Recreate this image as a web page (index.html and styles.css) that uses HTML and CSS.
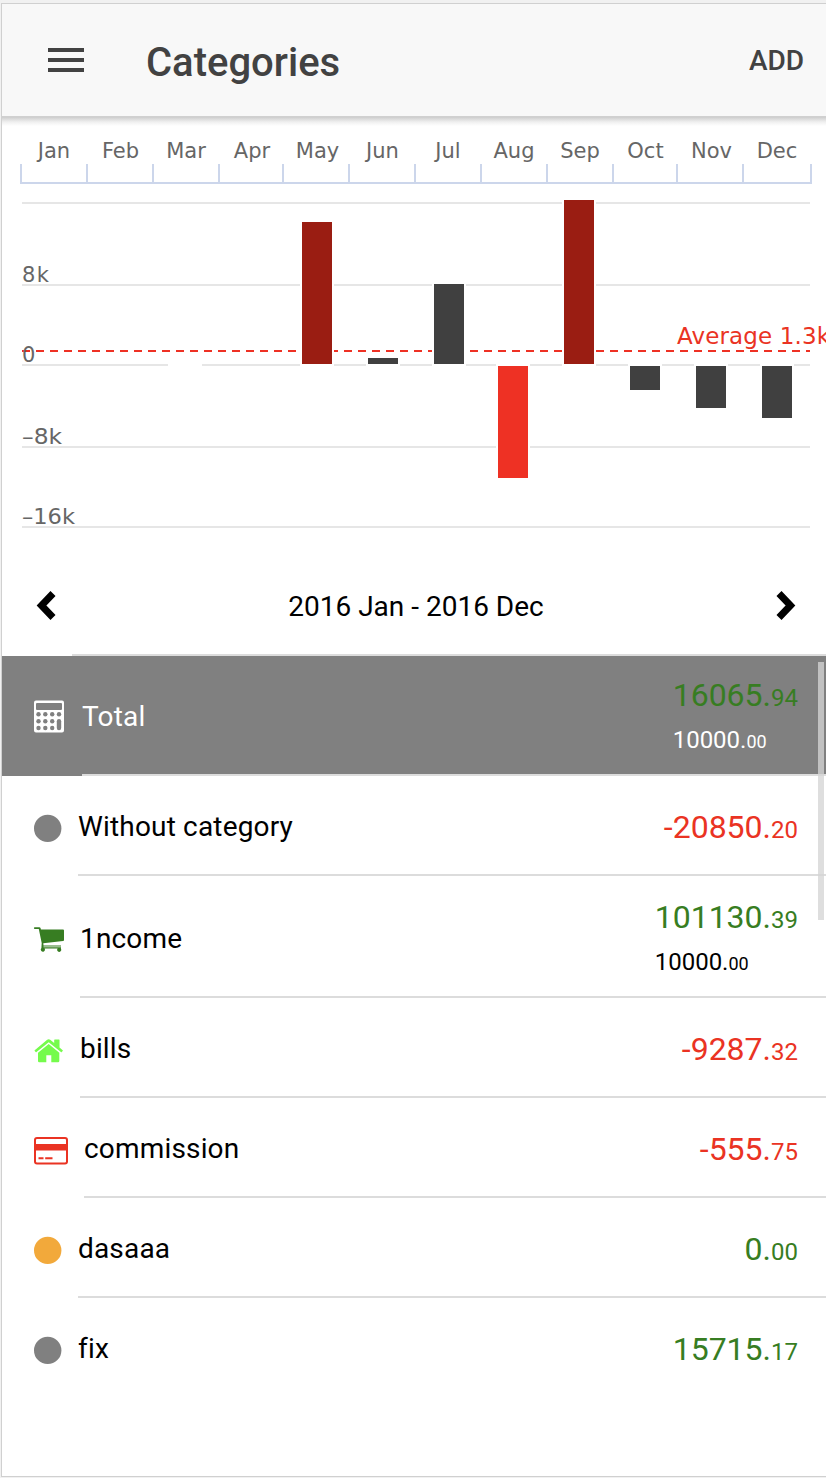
FILE: index.html
```html
<!DOCTYPE html>
<html lang="en">
<head>
    <meta charset="UTF-8">
    <meta name="viewport" content="width=device-width, initial-scale=1.0">
    <title>Categories</title>
    <link rel="stylesheet" href="styles.css">
</head>
<body>
    <div class="app">
        <header class="navbar">
            <svg class="menu-icon" width="36" height="24" viewBox="0 0 36 24">
                <path d="M0 0h36v4H0zM0 10h36v4H0zM0 20h36v4H0z"/>
            </svg>
            <h1 class="title">Categories</h1>
            <a class="add">ADD</a>
        </header>

        <svg class="chart" width="824" height="440" viewBox="2 116 824 440">
            <!-- month axis -->
            <g class="months">
                <text x="54" y="158">Jan</text>
                <text x="120.5" y="158">Feb</text>
                <text x="186" y="158">Mar</text>
                <text x="252" y="158">Apr</text>
                <text x="317.5" y="158">May</text>
                <text x="382.5" y="158">Jun</text>
                <text x="448" y="158">Jul</text>
                <text x="514" y="158">Aug</text>
                <text x="580" y="158">Sep</text>
                <text x="645.5" y="158">Oct</text>
                <text x="711.5" y="158">Nov</text>
                <text x="777" y="158">Dec</text>
            </g>
            <path class="axis" d="M21 164v19h790v-19M87 164v19M153 164v19M219 164v19M283 164v19M349 164v19M415 164v19M481 164v19M547 164v19M613 164v19M677 164v19M743 164v19"/>
            <path class="grid" d="M22 203h788M22 285h788M22 365h788M22 447h788M22 527h788"/>
            <path class="average" d="M22 351h788"/>

            <!-- monthly totals -->
            <g class="bars">
                <rect class="none" x="169" y="364" width="32" height="2"/>
                <rect class="high" x="301" y="221" width="32" height="144"/>
                <rect x="367" y="357" width="32" height="8"/>
                <rect x="433" y="283" width="32" height="82"/>
                <rect class="low" x="497" y="365" width="32" height="114"/>
                <rect class="high" x="563" y="199" width="32" height="166"/>
                <rect x="629" y="365" width="32" height="26"/>
                <rect x="695" y="365" width="32" height="44"/>
                <rect x="761" y="365" width="32" height="54"/>
            </g>

            <g class="values">
                <text x="22" y="282" textLength="27">8k</text>
                <text x="22" y="362">0</text>
                <text x="22" y="444" textLength="40" lengthAdjust="spacingAndGlyphs">–8k</text>
                <text x="22" y="524" textLength="53" lengthAdjust="spacingAndGlyphs">–16k</text>
            </g>
            <text class="average-label" x="677" y="344" textLength="153">Average 1.3k</text>
        </svg>

        <div class="period">
            <div class="period-inner">
                <svg width="20" height="30" viewBox="0 0 20 30"><path d="M17 2.5L5.5 14.5 17 26.5"/></svg>
                <span>2016 Jan - 2016 Dec</span>
                <svg width="20" height="30" viewBox="0 0 20 30"><path d="M3 2.5l11.5 12L3 26.5"/></svg>
            </div>
        </div>

        <ul class="list">
            <li class="item item-total">
                <svg class="icon" width="32" height="34" viewBox="0 0 32 34">
                    <path fill="#fff" fill-rule="evenodd" d="M2 .5h26a2 2 0 0 1 2 2v28a2 2 0 0 1-2 2H2a2 2 0 0 1-2-2v-28a2 2 0 0 1 2-2zM3 3a1 1 0 0 0-1 1v5a1 1 0 0 0 1 1h24a1 1 0 0 0 1-1V4a1 1 0 0 0-1-1z"/>
                    <g fill="gray">
                        <circle cx="4.5" cy="14.3" r="2.2"/><circle cx="11.3" cy="14.3" r="2.2"/><circle cx="18.2" cy="14.3" r="2.2"/><circle cx="25" cy="14.3" r="2.2"/>
                        <circle cx="4.5" cy="21.2" r="2.2"/><circle cx="11.3" cy="21.2" r="2.2"/><circle cx="18.2" cy="21.2" r="2.2"/>
                        <circle cx="4.5" cy="28" r="2.2"/><circle cx="11.3" cy="28" r="2.2"/><circle cx="18.2" cy="28" r="2.2"/>
                        <rect x="22.8" y="19" width="4.4" height="11.2" rx="2.2"/>
                    </g>
                </svg>
                <div class="item-inner">
                    <span class="name">Total</span>
                    <div class="sums">
                        <div class="amount plus">16065.<small>94</small></div>
                        <div class="budget">10000.<small>00</small></div>
                    </div>
                </div>
            </li>
            <li class="item">
                <svg class="icon" width="28" height="28" viewBox="0 0 28 28"><circle cx="13.7" cy="13.4" r="13.7" fill="gray"/></svg>
                <div class="item-inner">
                    <span class="name">Without category</span>
                    <div class="amount minus">-20850.<small>20</small></div>
                </div>
            </li>
            <li class="item item-tall">
                <svg class="icon" width="30" height="26" viewBox="0 0 30 26">
                    <path fill="#377d22" d="M.8.2h4.4q1.2 0 1.5 1.2l.2 1H29q1 0 1 1V13q0 .9-.9 1L9.3 16.3l.2 2.2H27v1.1H9.5v.7H27v1.1h-.2a2.1 2.1 0 1 1-3.2 0H10.6a2.1 2.1 0 1 1-3.2-.3L7.7 16 4.8 2H.8a.9.9 0 0 1 0-1.8z"/>
                </svg>
                <div class="item-inner">
                    <span class="name">1ncome</span>
                    <div class="sums">
                        <div class="amount plus">101130.<small>39</small></div>
                        <div class="budget">10000.<small>00</small></div>
                    </div>
                </div>
            </li>
            <li class="item">
                <svg class="icon" width="30" height="24" viewBox="0 0 30 24">
                    <path fill="#75fb4c" d="M14.7 4.9L25.3 13.7V22q0 1.2-1.2 1.2h-6.8v-7h-5v7H5.3Q4 23.2 4 22v-8.3z"/>
                    <path fill="#75fb4c" d="M13.2.8q1.5-1.2 3 0l4 3.3V1q0-.6.6-.6H25q.5 0 .5.6v7.5l3.2 2.7q.4.4 0 .8l-1 1.1q-.4.4-.8 0L14.7 3.2 2.5 13.1q-.4.4-.8 0l-1-1.1q-.4-.4 0-.8z"/>
                </svg>
                <div class="item-inner">
                    <span class="name">bills</span>
                    <div class="amount minus">-9287.<small>32</small></div>
                </div>
            </li>
            <li class="item">
                <svg class="icon" width="34" height="28" viewBox="0 0 34 28">
                    <rect x="1" y="1" width="32" height="25.5" rx="2" fill="none" stroke="#ea3323" stroke-width="2"/>
                    <path fill="#ea3323" d="M1 7h32v6.5H1zM4.5 20.3h5v2h-5zM11.2 20.3h7.3v2h-7.3z"/>
                </svg>
                <div class="item-inner">
                    <span class="name">commission</span>
                    <div class="amount minus">-555.<small>75</small></div>
                </div>
            </li>
            <li class="item">
                <svg class="icon" width="28" height="28" viewBox="0 0 28 28"><circle cx="13.7" cy="13.4" r="13.7" fill="#f2a93b"/></svg>
                <div class="item-inner">
                    <span class="name">dasaaa</span>
                    <div class="amount plus">0.<small>00</small></div>
                </div>
            </li>
            <li class="item">
                <svg class="icon" width="28" height="28" viewBox="0 0 28 28"><circle cx="13.7" cy="13.4" r="13.7" fill="gray"/></svg>
                <div class="item-inner">
                    <span class="name">fix</span>
                    <div class="amount plus">15715.<small>17</small></div>
                </div>
            </li>
        </ul>
    </div>
</body>
</html>
```
FILE: styles.css
```css
* {
    box-sizing: border-box;
}
body {
    margin: 0;
    padding: 3px 0 0 1px;
    background: #f1f1f1;
    font-family: Roboto, sans-serif;
    color: #000;
    overflow: hidden;
}
.app {
    height: 1474px;
    background: #fff;
    border: 1px solid #d0d0d0;
    border-right: none;
}
.navbar {
    position: relative;
    display: flex;
    align-items: center;
    height: 112px;
    padding: 0 22px 0 46px;
    background: #f8f8f8;
    color: #424242;
}
/* soft shadow under the bar */
.navbar::after {
    content: "";
    position: absolute;
    left: 0;
    top: 100%;
    width: 100%;
    height: 10px;
    background: linear-gradient(#d0d0d0 2px, #d4d4d4 2px, #f0f0f0 6px, #fff);
}
.menu-icon {
    fill: #424242;
}
.title {
    flex: 1;
    margin: 4px 0 0 62px;
    font-size: 40px;
    font-weight: 500;
}
.add {
    font-size: 28px;
    font-weight: 500;
}
.chart {
    display: block;
}
.chart text {
    font-family: "DejaVu Sans", sans-serif;
    font-size: 21px;
    fill: #666;
}
.months text {
    text-anchor: middle;
}
.chart .average-label {
    font-size: 23px;
    fill: #ea3323;
}
.axis {
    fill: none;
    stroke: #ccd6eb;
    stroke-width: 2;
}
.grid {
    stroke: #e6e6e6;
    stroke-width: 2;
}
.average {
    stroke: #ee3124;
    stroke-width: 2;
    stroke-dasharray: 8 6;
}
.bars rect {
    fill: #404040;
    stroke: #fff;
    stroke-width: 2;
}
.bars .high {
    fill: #9a1d12;
}
.bars .low {
    fill: #ee3124;
}
.bars .none {
    fill: #fff;
}
.period {
    height: 100px;
    padding-left: 70px;
}
.period-inner {
    display: flex;
    align-items: center;
    justify-content: space-between;
    height: 100%;
    margin-left: -36px;
    padding: 0 30px 0 0;
    font-size: 28px;
    background: linear-gradient(#dcdcdc, #dcdcdc) 36px 100% / 100% 2px no-repeat;
}
.period path {
    fill: none;
    stroke: #000;
    stroke-width: 7;
}
.list {
    position: relative;
    margin: 0;
    padding: 0;
    list-style: none;
}
/* scroll indicator */
.list::after {
    content: "";
    position: absolute;
    right: 2px;
    top: 6px;
    width: 6px;
    height: 258px;
    background: rgba(212, 212, 212, 0.77);
}
.item {
    display: flex;
    height: 100px;
    padding-left: 32px;
}
.icon {
    align-self: center;
    flex: none;
    margin-top: 6px;
    overflow: visible;
}
.item-inner {
    flex: 1;
    display: flex;
    align-items: center;
    justify-content: space-between;
    margin-left: 16px;
    padding: 4px 28px 0 0;
    border-bottom: 2px solid #dcdcdc;
}
.item:last-child .item-inner {
    border-bottom-color: transparent;
}
.item-total {
    height: 120px;
    background: gray;
    color: #fff;
}
.item-total .icon {
    margin-top: 2px;
}
.item-total .sums {
    margin-top: 0;
}
.item-tall {
    height: 122px;
}
.item-tall .item-inner {
    padding-top: 5px;
}
.name {
    margin-top: -2px;
    font-size: 28px;
    letter-spacing: 0.17px;
}
.item-tall .name {
    margin-top: 0;
}
.sums {
    margin-top: 2px;
}
.amount {
    font-size: 32px;
    line-height: 44px;
}
.amount small {
    font-size: 24px;
    line-height: 0;
}
.budget {
    margin-top: 1px;
    font-size: 24px;
    line-height: 44px;
}
.budget small {
    font-size: 18px;
    line-height: 0;
}
.plus {
    color: #377d22;
}
.minus {
    color: #ea3323;
}
```
